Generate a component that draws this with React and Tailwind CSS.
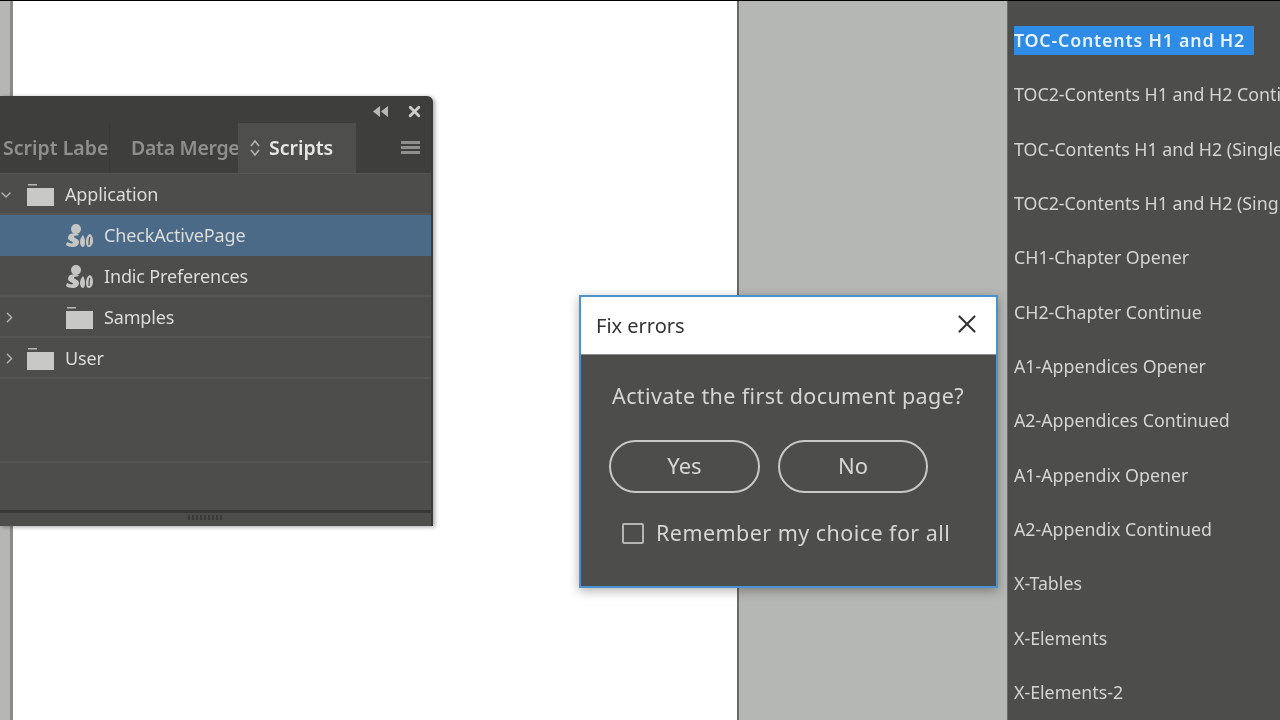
import { ChevronDown, ChevronRight, X } from "lucide-react";

const styles = [
    "TOC-Contents H1 and H2",
    "TOC2-Contents H1 and H2 Continued",
    "TOC-Contents H1 and H2 (Single Page)",
    "TOC2-Contents H1 and H2 (Single Page)",
    "CH1-Chapter Opener",
    "CH2-Chapter Continue",
    "A1-Appendices Opener",
    "A2-Appendices Continued",
    "A1-Appendix Opener",
    "A2-Appendix Continued",
    "X-Tables",
    "X-Elements",
    "X-Elements-2",
];

function FolderIcon() {
    return (
        <svg width="28" height="22" viewBox="0 0 28 22" className="shrink-0">
            <path d="M1 0h9v1.500H1z" fill="#b8b9b7" />
            <path d="M0 4h27v18H0z" fill="#c8c9c7" />
        </svg>
    );
}

// the scripts icon: a round head over an S body, then two leaf shapes with a slit
function ScriptIcon() {
    return (
        <svg width="28" height="24" viewBox="0 0 28 24" className="shrink-0">
            <circle cx="10" cy="5" r="5" fill="#c6c7c5" />
            <path d="M4 10c3-1 8-1 9 1-2 1-5 0-5 2 0 1 5 2 5 5 0 4-4 5-6 5-3 0-6-1-7-2l1-3c2 1 5 2 6 1 0-2-5-2-5-5 0-2 1-3 2-4z" fill="#c6c7c5" />
            <path d="M17 11c-2 2-3 5-3 7s1 5 3 5c1 0 2-2 2-5s-1-5-2-7z" fill="#c6c7c5" />
            <path d="M24 10c-3 1-4 5-4 8s1 5 3 5 4-3 4-6-1-6-3-7z" fill="#c6c7c5" />
            <path d="M24 13c-1 2-1 6-1 8" fill="none" stroke="#4d4e4b" strokeWidth="1.200" />
        </svg>
    );
}

function TreeRow({ label, icon, indent, arrow, selected }) {
    return (
        <div className={`flex h-[41px] shrink-0 items-center border-b-2 pt-[2px] ${selected ? "border-[#4b6a87] bg-[#4b6a87]" : "border-[#555653]"}`}>
            <div className={`flex items-center ${indent ? "pl-[66px]" : "pl-[27px]"}`}>
                {icon === "folder" ? <FolderIcon /> : <ScriptIcon />}
                <span className="ml-[10px] text-[18px] tracking-[-0.15px] text-[#dcdcda]">{label}</span>
            </div>
            {arrow === "down" && <ChevronDown className="absolute left-[-2px] text-[#b4b5b3]" size={16} strokeWidth={2} />}
            {arrow === "right" && <ChevronRight className="absolute left-[1px] text-[#b4b5b3]" size={17} strokeWidth={2} />}
        </div>
    );
}

function ScriptsPanel() {
    return (
        <div className="absolute left-0 top-[95px] flex h-[430px] w-[433px] flex-col rounded-tr-md border-r-2 border-[#3a3b39] bg-[#4d4e4b] shadow-[2px_1px_4px_rgba(0,0,0,0.35)]">
            <div className="flex h-[27px] shrink-0 items-center justify-end gap-[18px] rounded-tr-md bg-[#3e3f3c] pr-[8px] pt-[3px]">
                <svg width="15" height="11" viewBox="0 0 15 11">
                    <path d="M7 0v11L0 5.500zM15 0v11L8 5.500z" fill="#b8b9b7" />
                </svg>
                <X className="text-[#cfd0ce]" size={17} strokeWidth={4} />
            </div>
            <div className="flex h-[50px] shrink-0 items-stretch bg-[#3e3f3c] text-[19.500px] font-semibold text-[#8f908e]">
                <div className="flex w-[110px] items-center overflow-hidden whitespace-nowrap border-r border-[#393a38] pl-[3px]">Script Label</div>
                <div className="flex w-[128px] items-center overflow-hidden whitespace-nowrap pl-[21px] tracking-[-0.3px]">Data Merge</div>
                <div className="flex w-[118px] items-center bg-[#4e4f4c] pl-[11px] text-[#e6e6e4]">
                    <svg width="12" height="18" viewBox="0 0 12 18" className="mr-[8px]">
                        <path d="M2 7l4-5 4 5M2 11l4 5 4-5" fill="none" stroke="#b6b7b5" strokeWidth="1.500" />
                    </svg>
                    Scripts
                </div>
                <div className="flex flex-1 items-center justify-end pr-[11px]">
                    <div className="mb-[1px] flex w-[19px] flex-col gap-[2px]">
                        <div className="h-[3px] bg-[#8f908e]" />
                        <div className="h-[3px] bg-[#8f908e]" />
                        <div className="h-[3px] bg-[#8f908e]" />
                    </div>
                </div>
            </div>
            <div className="flex flex-1 flex-col border-t border-[#575855]">
                <TreeRow label="Application" icon="folder" arrow="down" />
                <TreeRow label="CheckActivePage" icon="script" indent selected />
                <TreeRow label="Indic Preferences" icon="script" indent />
                <TreeRow label="Samples" icon="folder" indent arrow="right" />
                <TreeRow label="User" icon="folder" arrow="right" />
                <div className="h-[84px] shrink-0 border-b-2 border-[#555653]" />
            </div>
            <div className="flex h-[16px] shrink-0 justify-center border-t-[3px] border-[#393a38] pt-[2px]">
                <div className="ml-[-20px] h-[5px] w-[36px] bg-[repeating-linear-gradient(90deg,#3a3b39_0_2px,#4d4e4b_2px_4px)]" />
            </div>
        </div>
    );
}

function FixErrorsDialog() {
    return (
        <div className="absolute left-[579px] top-[294px] flex h-[293px] w-[419px] flex-col border-2 border-[#4a93d0] bg-[#4d4e4b] shadow-[0_3px_10px_rgba(0,0,0,0.3)]">
            <div className="flex h-[57px] shrink-0 items-center justify-between bg-white pl-[15px] pr-[14px]">
                <span className="text-[20px] text-[#333333]">Fix errors</span>
                <X className="mb-[4px] text-[#333333]" size={30} strokeWidth={1.700} />
            </div>
            <div className="flex flex-1 flex-col items-start border-t border-[#8f908e] text-[#d6d6d4]">
                <p className="ml-[31px] mt-[25px] text-[21.500px] leading-[32px] tracking-[0.4px]">Activate the first document page?</p>
                <div className="ml-[28px] mt-[28px] flex gap-[18px] text-[22px]">
                    <button className="h-[53px] w-[151px] rounded-full border-2 border-[#c8c9c7] pb-[2px]">Yes</button>
                    <button className="h-[53px] w-[150px] rounded-full border-2 border-[#c8c9c7] pb-[2px]">No</button>
                </div>
                <label className="ml-[41px] mt-[24px] flex items-center">
                    <span className="h-[21px] w-[22px] rounded-[2px] border-2 border-[#b4b5b3]" />
                    <span className="ml-[12px] text-[21.500px] leading-[32px] tracking-[0.45px]">Remember my choice for all</span>
                </label>
            </div>
        </div>
    );
}

function App() {
    return (
        <div className="relative flex h-[720px] w-[1280px] overflow-hidden border-t border-black font-['Noto_Sans',sans-serif] blur-[0.4px]">
            <div className="w-[10px] shrink-0 bg-[#b5b7b4]" />
            <div className="w-[3px] shrink-0 bg-[#8a8b89]" />
            <div className="w-[724px] shrink-0 bg-white" />
            <div className="w-[2px] shrink-0 bg-[#6a6b69]" />
            <div className="w-[268px] shrink-0 bg-[#b5b7b4]" />
            <div className="flex flex-1 flex-col overflow-hidden border-l border-[#6a6b69] bg-[#4d4e4b] pl-[6px] pt-[25px]">
                {styles.map((name, i) => (
                    <div key={name} className="flex h-[54.330px] shrink-0 items-start whitespace-nowrap">
                        <span className={`flex h-[29px] items-center text-[17.800px] ${i === 0 ? "bg-[#2f8ce6] pr-[9px] font-semibold tracking-[0.8px] text-[#e8f2fb]" : "text-[#d4d4d2]"}`}>
                            {name}
                        </span>
                    </div>
                ))}
            </div>
            <ScriptsPanel />
            <FixErrorsDialog />
        </div>
    );
}

export default App;
